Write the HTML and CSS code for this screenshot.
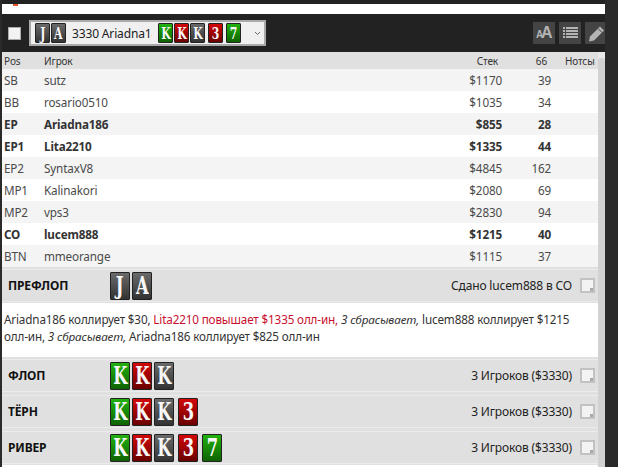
FILE: index.html
```html
<!DOCTYPE html>
<html>
<head>
    <title>Hand history</title>
    <link rel="stylesheet" href="styles.css">
</head>
<body>
    <div class="app">
        <div class="top-strip"><span class="top-mark"></span></div>

        <div class="toolbar">
            <span class="check"></span>
            <div class="select">
                <span class="card sm dark"><span>J</span></span>
                <span class="card sm dark"><span>A</span></span>
                <span class="select-text">3330 Ariadna186</span>
                <span class="card sm green"><span>K</span></span>
                <span class="card sm red"><span>K</span></span>
                <span class="card sm dark"><span>K</span></span>
                <span class="card sm red gap"><span>3</span></span>
                <span class="card sm green gap"><span>7</span></span>
                <svg class="chevron" width="7" height="5" viewBox="0 0 7 5"><path d="M1 1l2.500 2.500L6 1" fill="none" stroke="#666" stroke-width="1"/></svg>
            </div>
            <div class="tools">
                <span class="tool">
                    <svg width="22" height="22" viewBox="0 0 22 22"><text x="3" y="16" class="tool-a-small">A</text><text x="8" y="16" class="tool-a">A</text></svg>
                </span>
                <span class="tool">
                    <svg width="22" height="22" viewBox="0 0 22 22"><path d="M4 5h2v2H4zM7 5h12v2H7zM4 8h2v2H4zM7 8h12v2H7zM4 11h2v2H4zM7 11h12v2H7zM4 14h2v2H4zM7 14h12v2H7z" fill="#b4b4b4"/></svg>
                </span>
                <span class="tool tool-cut">
                    <svg width="20" height="22" viewBox="0 0 20 22"><path d="M4 19.500l1-5L15 4.500l4 4L9 18.500z" fill="#b4b4b4"/><path d="M13 6.500l4 4" stroke="#444" stroke-width="1"/></svg>
                </span>
            </div>
        </div>

        <div class="content">
            <div class="main">
                <div class="row head">
                    <span>Pos</span><span>Игрок</span><span class="num">Стек</span><span class="num">66</span><span class="notes">Нотсы</span>
                </div>
                <div class="row"><span>SB</span><span>sutz</span><span class="num">$1170</span><span class="num">39</span><span></span></div>
                <div class="row"><span>BB</span><span>rosario0510</span><span class="num">$1035</span><span class="num">34</span><span></span></div>
                <div class="row hero"><span>EP</span><span>Ariadna186</span><span class="num">$855</span><span class="num">28</span><span></span></div>
                <div class="row hero"><span>EP1</span><span>Lita2210</span><span class="num">$1335</span><span class="num">44</span><span></span></div>
                <div class="row"><span>EP2</span><span>SyntaxV8</span><span class="num">$4845</span><span class="num">162</span><span></span></div>
                <div class="row"><span>MP1</span><span>Kalinakori</span><span class="num">$2080</span><span class="num">69</span><span></span></div>
                <div class="row"><span>MP2</span><span>vps3</span><span class="num">$2830</span><span class="num">94</span><span></span></div>
                <div class="row hero"><span>CO</span><span>lucem888</span><span class="num">$1215</span><span class="num">40</span><span></span></div>
                <div class="row"><span>BTN</span><span>mmeorange</span><span class="num">$1115</span><span class="num">37</span><span></span></div>

                <div class="street">
                    <b class="street-name">ПРЕФЛОП</b>
                    <span class="card dark"><span>J</span></span><span class="card dark"><span>A</span></span>
                    <span class="street-info">Сдано lucem888 в CO</span>
                    <svg class="note" width="15" height="15" viewBox="0 0 15 15"><rect x="1" y="1" width="13" height="13" fill="#f3f3f3" stroke="#c2c2c2" stroke-width="2"/><rect x="10" y="10" width="3" height="3" fill="#a8a8a8"/></svg>
                </div>
                <p class="actions">Ariadna186 коллирует $30, <span class="raise">Lita2210 повышает $1335 олл-ин,</span> <i>3 сбрасывает,</i> lucem888 коллирует $1215 олл-ин, <i>3 сбрасывает,</i> Ariadna186 коллирует $825 олл-ин</p>

                <div class="street">
                    <b class="street-name">ФЛОП</b>
                    <span class="card green"><span>K</span></span><span class="card red"><span>K</span></span><span class="card dark"><span>K</span></span>
                    <span class="street-info">3 Игроков ($3330)</span>
                    <svg class="note" width="15" height="15" viewBox="0 0 15 15"><rect x="1" y="1" width="13" height="13" fill="#f3f3f3" stroke="#c2c2c2" stroke-width="2"/><rect x="10" y="10" width="3" height="3" fill="#a8a8a8"/></svg>
                </div>
                <div class="street">
                    <b class="street-name">ТЁРН</b>
                    <span class="card green"><span>K</span></span><span class="card red"><span>K</span></span><span class="card dark"><span>K</span></span><span class="card red gap"><span>3</span></span>
                    <span class="street-info">3 Игроков ($3330)</span>
                    <svg class="note" width="15" height="15" viewBox="0 0 15 15"><rect x="1" y="1" width="13" height="13" fill="#f3f3f3" stroke="#c2c2c2" stroke-width="2"/><rect x="10" y="10" width="3" height="3" fill="#a8a8a8"/></svg>
                </div>
                <div class="street">
                    <b class="street-name">РИВЕР</b>
                    <span class="card green"><span>K</span></span><span class="card red"><span>K</span></span><span class="card dark"><span>K</span></span><span class="card red gap"><span>3</span></span><span class="card green gap"><span>7</span></span>
                    <span class="street-info">3 Игроков ($3330)</span>
                    <svg class="note" width="15" height="15" viewBox="0 0 15 15"><rect x="1" y="1" width="13" height="13" fill="#f3f3f3" stroke="#c2c2c2" stroke-width="2"/><rect x="10" y="10" width="3" height="3" fill="#a8a8a8"/></svg>
                </div>
            </div>
            <div class="scrollbar"><div class="thumb"></div></div>
        </div>
    </div>
</body>
</html>
```

FILE: styles.css
```css
html, body { margin: 0; height: 100%; overflow: hidden; }
body { background: #2a2a2a; font-family: "Noto Sans", Roboto, sans-serif; font-size: 11.7px; letter-spacing: -0.15px; color: #4a4a4a; }
.app { width: 603px; margin-left: 2px; padding-top: 4px; height: 463px; overflow: hidden; background: #222; }

.top-strip { height: 10px; background: #fff; overflow: hidden; }
.top-mark { display: block; width: 5px; height: 2px; margin-left: 11px; background: #e0562a; }

.toolbar { height: 38px; display: flex; align-items: center; background: #222; }
.check { width: 11px; height: 11px; margin-left: 6px; background: #f2f2f2; border: 1px solid #aaa; }
.select { box-sizing: border-box; width: 237px; height: 26px; margin-left: 8px; display: flex; align-items: center; padding-left: 4px; background: #f0f0f0; border: 2px solid #aaa; }
.select-text { width: 80px; margin: 0 6px 0 5px; overflow: hidden; white-space: nowrap; color: #222; font-size: 12px; }
.chevron { margin-left: 12px; }
.tools { margin-left: auto; margin-right: -2px; display: flex; gap: 4px; }
.tool { width: 22px; height: 22px; background: #444; display: block; }
.tool svg { display: block; }
.tool-a { font: bold 16px "Liberation Sans", sans-serif; fill: #b4b4b4; }
.tool-a-small { font: bold 10px "Liberation Sans", sans-serif; fill: #b4b4b4; }

.card { display: inline-flex; align-items: center; justify-content: center; box-sizing: border-box; width: 20px; height: 28px; margin-right: 2px; border: 1px solid #222; border-radius: 1px; color: #f8f8f8; font: bold 24px "DejaVu Serif", serif; letter-spacing: 0; }
.card span { display: block; transform: scaleX(0.68); }
.card.gap { margin-left: 2px; }
.card.sm { width: 15px; height: 20px; margin-right: 1px; font-size: 16px; }
.dark { background: linear-gradient(#6a6a6a, #333); }
.green { background: linear-gradient(#22b20e, #0e6300); }
.red { background: linear-gradient(#d40808, #6a0000); }

.content { display: flex; }
.main { width: 596px; background: #fff; }
.scrollbar { width: 7px; background: #e9e9e9; padding-top: 6px; }
.thumb { height: 420px; background: #d2d2d2; border-radius: 3px 3px 0 0; }

.row { display: grid; grid-template-columns: 40px 1fr 60px 49px 47px; align-items: center; height: 22px; padding-left: 2px; }
.row:nth-child(even) { background: #f4f4f4; }
.row.head { height: 17px; background: #e0e0e0; font-size: 10px; color: #333; }
.row.hero { font-weight: bold; color: #333; }
.num { text-align: right; }
.head .num { padding-right: 4px; }
.head .notes { padding-left: 14px; white-space: nowrap; }

.street { display: flex; align-items: center; box-sizing: border-box; height: 36px; padding-left: 6px; background: #e0e0e0; border-top: 2px solid #e0e0e0; border-bottom: 1px solid #e0e0e0; box-shadow: inset 0 1px #ebebeb, inset 0 -1px #ebebeb; color: #222; }
.street-name { width: 102px; font-size: 12px; color: #111; }
.street-info { margin-left: auto; margin-right: 8px; font-size: 12px; }
.note { margin-right: 3px; }
.actions { height: 54px; box-sizing: border-box; margin: 0; padding: 8px 26px 0 2px; line-height: 17px; color: #333; }
.raise { color: #c8102e; }
```
